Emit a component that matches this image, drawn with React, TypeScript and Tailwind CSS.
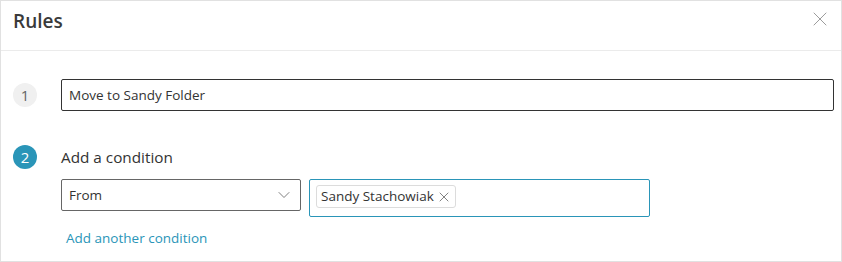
import { X, ChevronDown } from "lucide-react"

export default function App() {
    return (
        <div className="w-[842px] h-[262px] bg-white border border-[#e1e1e1] text-[#323130] font-['Segoe_UI','Open_Sans',sans-serif] flex flex-col">
            <div className="h-[50px] shrink-0 border-b border-[#ebebeb] flex items-center justify-between pl-[12px] pr-[9px]">
                <h1 className="text-[19px] font-semibold text-[#3a3a3a] leading-none -mt-[9px]">Rules</h1>
                <button className="text-[#8a8a8a] -mt-[13px]">
                    <X size={24} strokeWidth={0.85} />
                </button>
            </div>

            <div className="flex flex-col pl-[12px] pr-[7px] pt-[28px]">
                <div className="flex items-center gap-[24px]">
                    <div className="w-[24px] h-[24px] shrink-0 rounded-full bg-[#f0f0f0] text-[#666] text-[15px] flex items-center justify-center">1</div>
                    <input
                        className="flex-1 h-[32px] border border-[#333] rounded-[2px] px-[7px] text-[13.5px] text-[#333] outline-none"
                        defaultValue="Move to Sandy Folder"
                    />
                </div>

                <div className="flex items-center gap-[24px] mt-[34px]">
                    <div className="w-[24px] h-[24px] shrink-0 rounded-full bg-[#2a95b8] text-white text-[15px] flex items-center justify-center">2</div>
                    <p className="text-[15.3px] text-[#333]">Add a condition</p>
                </div>

                <div className="flex items-start gap-[8px] ml-[48px] mt-[10px]">
                    <div className="w-[240px] h-[32px] border border-[#666] rounded-[2px] flex items-center justify-between pl-[7px] pr-[6px] text-[13.5px] text-[#333]">
                        <span>From</span>
                        <ChevronDown size={20} strokeWidth={0.9} className="text-[#555]" />
                    </div>
                    <div className="w-[341px] h-[38px] border border-[#2a95b8] rounded-[2px] flex items-start pt-[5px] px-[6px]">
                        <div className="h-[23px] border border-[#dcdcdc] rounded-[3px] flex items-center gap-[2px] pl-[4px] pr-[3px] text-[13.5px] text-[#333]">
                            <span>Sandy Stachowiak</span>
                            <X size={16} strokeWidth={1.1} className="text-[#555]" />
                        </div>
                    </div>
                </div>

                <a className="ml-[53px] mt-[11px] text-[13.5px] text-[#2a95b8] cursor-pointer">Add another condition</a>
            </div>
        </div>
    )
}
